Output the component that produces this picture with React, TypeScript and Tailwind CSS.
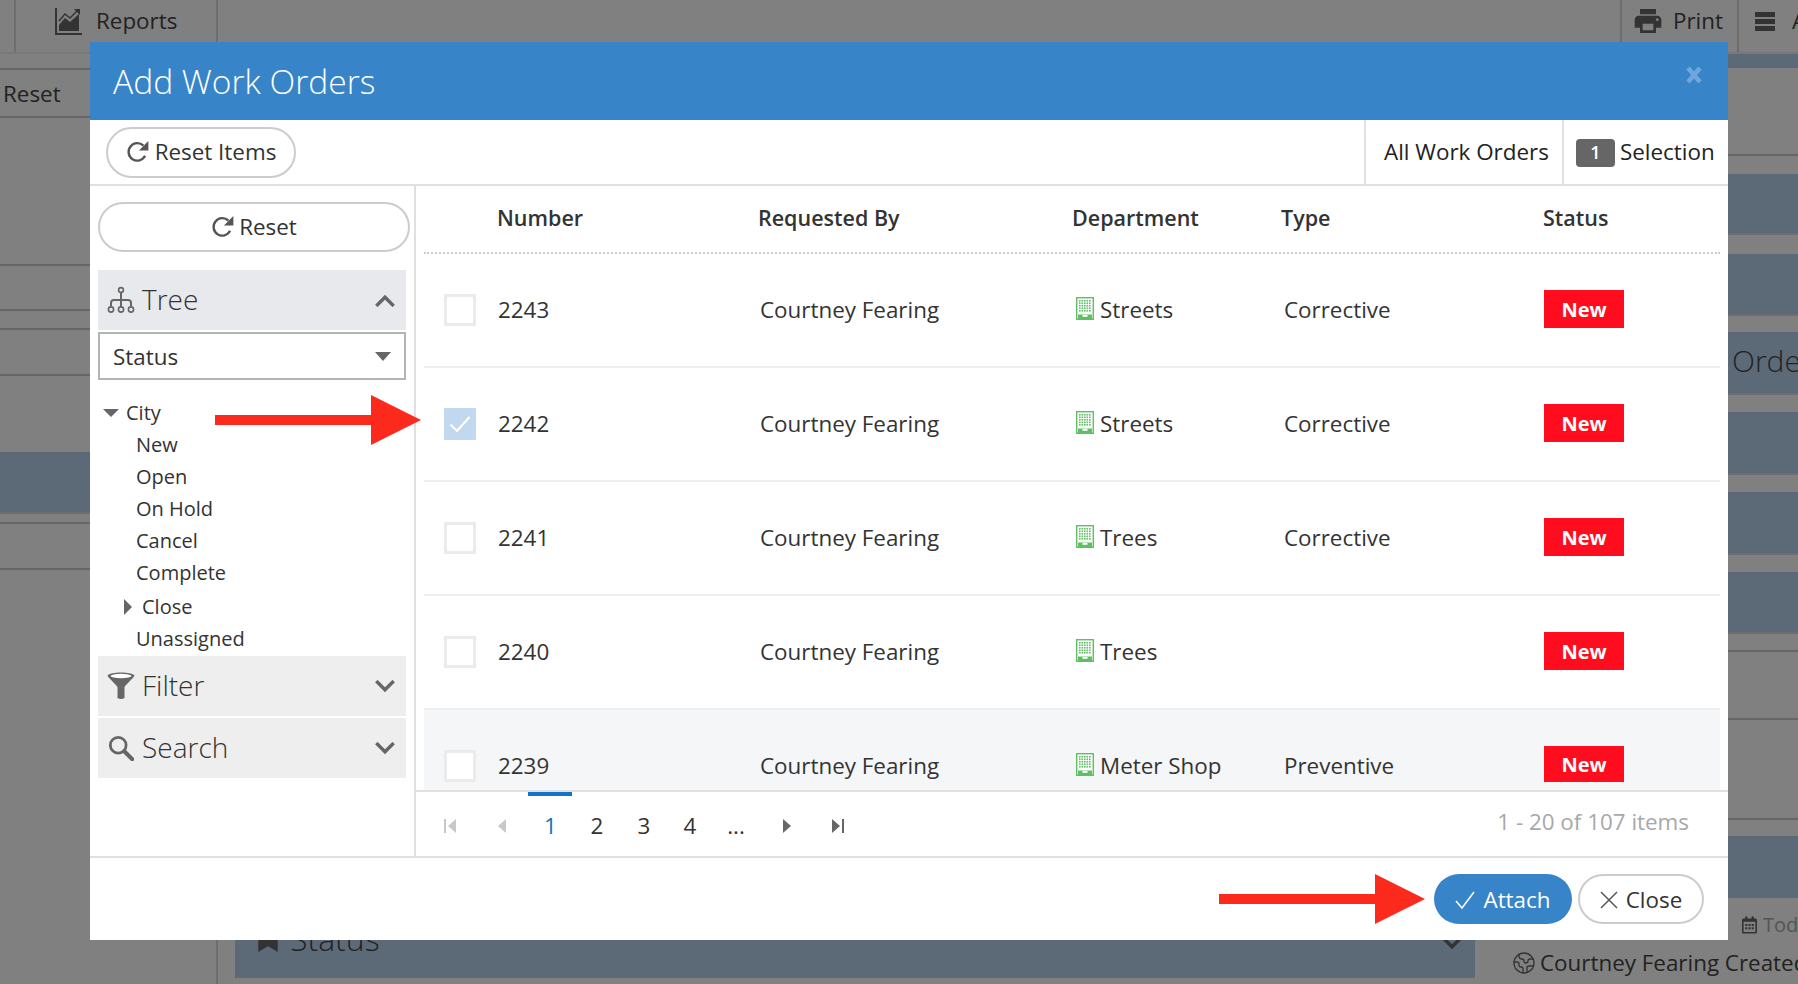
import React from 'react';
import { FaBookmark, FaRegCalendarAlt } from 'react-icons/fa';
import { MdLocalPrintshop } from 'react-icons/md';
import { Earth } from 'lucide-react';

const rows = [
  { id: '2243', dept: 'Streets', type: 'Corrective' },
  { id: '2242', dept: 'Streets', type: 'Corrective', checked: true },
  { id: '2241', dept: 'Trees', type: 'Corrective' },
  { id: '2240', dept: 'Trees', type: '' },
  { id: '2239', dept: 'Meter Shop', type: 'Preventive', cut: true },
];

const treeItems = ['New', 'Open', 'On Hold', 'Cancel', 'Complete'];

function RedoIcon({ className }: { className?: string }) {
  return (
    <svg viewBox="0 0 22 22" className={className} fill="none">
      <path d="M17.5 14.5A8 8 0 1 1 16 5.2" stroke="#555" strokeWidth="2.2" />
      <path d="M20.5 1v8.6h-8.6z" fill="#555" />
    </svg>
  );
}

function TreeIcon() {
  return (
    <svg viewBox="0 0 28 28" className="w-[28px] h-[28px]" fill="none" stroke="#666" strokeWidth="1.6">
      <circle cx="14" cy="4" r="2.4" />
      <path d="M14 6.5V21M4 20v-3q0-3 3-3h14q3 0 3 3v3" strokeWidth="2" />
      <circle cx="4" cy="23.5" r="2.6" />
      <circle cx="14" cy="23.5" r="2.6" />
      <circle cx="24" cy="23.5" r="2.6" />
    </svg>
  );
}

function FunnelIcon() {
  return (
    <svg viewBox="0 0 28 28" className="w-[28px] h-[28px]">
      <path d="M0.5 3.5C3 -0.5 25 -0.5 27.5 3.5C27.5 5 18.5 13 17.5 15V26q-3.5 2-7 0V15C9.5 13 0.5 5 0.5 3.5z" fill="#666" />
      <ellipse cx="14" cy="4" rx="10.5" ry="2.2" fill="#fff" />
    </svg>
  );
}

function SearchIcon() {
  return (
    <svg viewBox="0 0 28 28" className="w-[26px] h-[26px]" fill="none" stroke="#666">
      <circle cx="11" cy="11" r="8.5" strokeWidth="3" />
      <path d="M17.5 17.5L26 26" strokeWidth="4.5" strokeLinecap="round" />
    </svg>
  );
}

function Chevron({ up, color = '#666' }: { up?: boolean; color?: string }) {
  return (
    <svg viewBox="0 0 20 12" className="w-[22px] h-[13px]" fill="none" stroke={color} strokeWidth="3.2">
      <path d={up ? 'M2 11L10 3l8 8' : 'M2 1l8 8 8-8'} />
    </svg>
  );
}

function BuildingIcon() {
  const dots = [];
  for (let y = 3; y < 15; y += 2.5) {
    for (let x = 3; x < 15; x += 2.5) {
      dots.push(<rect key={`${x}-${y}`} x={x} y={y} width="1.6" height="1.6" fill="#5fbf62" />);
    }
  }
  return (
    <svg viewBox="0 0 18 23" className="w-[18px] h-[23px] shrink-0 mb-[2px]">
      <rect x="0.7" y="0.7" width="16.6" height="21.6" fill="#fff" stroke="#5fbf62" strokeWidth="1.4" />
      {dots}
      <path d="M2 17.5h14V22H2z" fill="#5fbf62" />
      <rect x="6.5" y="17.8" width="5" height="2" fill="#fff" />
    </svg>
  );
}

function ChartIcon() {
  return (
    <svg viewBox="0 0 27 27" className="w-[27px] h-[27px]">
      <path d="M1 0v26h26" fill="none" stroke="#333" strokeWidth="2" />
      <path d="M4 23v-6l6-7 5 4 9-8v17z" fill="#333" />
      <path d="M4 13l6-7 5 4 7-7" fill="none" stroke="#333" strokeWidth="1.4" />
      <path d="M19 1h6v6z" fill="#333" />
    </svg>
  );
}

function Tri({ dir, disabled }: { dir: 'first' | 'prev' | 'next' | 'last'; disabled?: boolean }) {
  const color = disabled ? '#c8c8c8' : '#666';
  return (
    <svg viewBox="0 0 14 14" className="w-[14px] h-[14px]" fill={color}>
      {dir === 'first' && <path d="M1 0h2v14H1zM13 0v14L5 7z" />}
      {dir === 'prev' && <path d="M11 0v14L3 7z" />}
      {dir === 'next' && <path d="M3 0v14l8-7z" />}
      {dir === 'last' && <path d="M1 0v14l8-7zM11 0h2v14h-2z" />}
    </svg>
  );
}

function Arrow({ className }: { className?: string }) {
  return (
    <svg viewBox="0 0 206 50" className={className} fill="#fc2a1c">
      <path d="M0 20h156V0l50 25-50 25V30H0z" />
    </svg>
  );
}

function Background() {
  return (
    <div className="h-full flex flex-col text-[#222] text-[22.4px]">
      <div className="h-[54px] shrink-0 flex items-center border-b-2 border-[#787878]">
        <div className="w-[16px] h-full border-r-2 border-[#6e6e6e]" />
        <div className="w-[202px] h-full border-r-2 border-[#6e6e6e] flex items-center pl-[39px] gap-[14px] pb-[10px]">
          <ChartIcon />
          Reports
        </div>
        <div className="flex-1" />
        <div className="w-[117px] h-full border-l-2 border-[#6e6e6e] flex items-center pl-[10px] gap-[9px] pb-[10px]">
          <MdLocalPrintshop className="w-[32px] h-[32px] text-[#333]" />
          Print
        </div>
        <div className="w-[61px] h-full border-l-2 border-[#6e6e6e] flex items-center pl-[16px] gap-[17px] pb-[10px]">
          <div className="flex flex-col gap-[2px] shrink-0">
            <div className="w-[20px] h-[5px] bg-[#333]" />
            <div className="w-[20px] h-[5px] bg-[#333]" />
            <div className="w-[20px] h-[5px] bg-[#333]" />
          </div>
          A
        </div>
      </div>
      <div className="flex-1 flex min-h-0">
        <div className="w-[218px] shrink-0 border-r-2 border-[#6e6e6e]">
          <div className="h-[16px] border-b-2 border-[#666]" />
          <div className="h-[48px] border-b-2 border-[#666] pl-[3px] pt-[2px] flex items-center">Reset</div>
          <div className="h-[148px] border-b-2 border-[#666]" />
          <div className="h-[45px] border-b-2 border-[#666]" />
          <div className="h-[19px] border-b-2 border-[#666]" />
          <div className="h-[46px] border-b-2 border-[#666]" />
          <div className="h-[76px]" />
          <div className="h-[62px] bg-[#5c6a78] border-b-2 border-[#6e6e6e]" />
          <div className="h-[10px] border-b-2 border-[#666]" />
          <div className="h-[46px] border-b-2 border-[#666]" />
        </div>
        <div className="flex-1 flex flex-col justify-end pl-[17px] pr-[18px] pb-[6px]">
          <div className="h-[60px] bg-[#5c6a78] flex items-end justify-between px-[23px] pb-[15px] text-[32px] font-light">
            <div className="flex items-center gap-[12px]">
              <FaBookmark className="w-[20px] h-[26px] text-[#333]" />
              Status
            </div>
            <div className="mr-[-11px] mb-[13px]"><Chevron color="#333" /></div>
          </div>
        </div>
        <div className="w-[305px] shrink-0 flex flex-col items-end">
          <div className="w-[235px] h-[14px] bg-[#5c6a78]" />
          <div className="w-[235px] h-[88px] border-b-2 border-[#666]" />
          <div className="w-[235px] h-[18px]" />
          <div className="w-[235px] h-[61px] bg-[#5c6a78] border-b-2 border-[#6e6e6e]" />
          <div className="w-[235px] h-[19px]" />
          <div className="w-[235px] h-[62px] bg-[#5c6a78] border-b-2 border-[#6e6e6e]" />
          <div className="w-[235px] h-[16px]" />
          <div className="w-[235px] h-[63px] bg-[#5c6a78] border-b-2 border-[#6e6e6e] overflow-hidden pl-[169px] pb-[4px] flex items-center text-[30px] font-light">
            Orders
          </div>
          <div className="w-[235px] h-[17px]" />
          <div className="w-[235px] h-[63px] bg-[#5c6a78] border-b-2 border-[#6e6e6e]" />
          <div className="w-[235px] h-[17px]" />
          <div className="w-[235px] h-[63px] bg-[#5c6a78] border-b-2 border-[#6e6e6e]" />
          <div className="w-[235px] h-[17px]" />
          <div className="w-[235px] h-[62px] bg-[#5c6a78] border-b-2 border-[#6e6e6e]" />
          <div className="w-[235px] h-[18px] border-b-2 border-[#666]" />
          <div className="w-[235px] h-[68px] border-b-2 border-[#666]" />
          <div className="w-[235px] h-[100px] border-b-2 border-[#666]" />
          <div className="w-[235px] h-[16px]" />
          <div className="w-[235px] h-[62px] bg-[#5c6a78]" />
          <div className="w-full flex-1 flex flex-col pl-[19px] overflow-hidden whitespace-nowrap">
            <div className="h-[54px] shrink-0 flex items-center justify-end gap-[6px] text-[20px] text-[#555]">
              <span className="w-[2px] h-[18px] bg-[#555] mr-[8px]" />
              <FaRegCalendarAlt className="w-[15px] h-[18px] text-[#333]" />
              <span className="w-[35px] overflow-hidden">Today</span>
            </div>
            <div className="flex items-center gap-[4px] mt-[-6px]">
              <Earth className="w-[24px] h-[24px] shrink-0 text-[#333]" strokeWidth={1.3} />
              Courtney Fearing Created
            </div>
          </div>
        </div>
      </div>
    </div>
  );
}

function OrdersTable() {
  return (
    <div className="h-[604px] shrink-0 overflow-hidden px-[8px]">
      <div className="h-[68px] pb-[2px] grid grid-cols-[73px_261px_314px_209px_262px_1fr] items-center border-b-2 border-dotted border-[#ccc] font-semibold text-[21.5px]">
        <div />
        <div>Number</div>
        <div>Requested By</div>
        <div>Department</div>
        <div>Type</div>
        <div>Status</div>
      </div>
      {rows.map(r => (
        <div
          key={r.id}
          className={`h-[114px] grid grid-cols-[74px_262px_316px_208px_260px_1fr] items-center border-b-2 border-[#eee] ${r.cut ? 'bg-[#f5f6f8]' : ''}`}
        >
          <div className="pl-[20px]">
            {r.checked ? (
              <div className="w-[32px] h-[32px] bg-[#c2d8ee] flex items-center justify-center">
                <svg viewBox="0 0 22 18" className="w-[22px] h-[18px]" fill="none" stroke="#fff" strokeWidth="2.2"><path d="M1.5 9.5L8 16 20.5 2" /></svg>
              </div>
            ) : (
              <div className="w-[32px] h-[32px] border-[3px] border-[#ebebeb] bg-white" />
            )}
          </div>
          <div>{r.id}</div>
          <div>Courtney Fearing</div>
          <div className="flex items-center gap-[6px]">
            <BuildingIcon />
            {r.dept}
          </div>
          <div>{r.type}</div>
          <div
            className={`w-[80px] bg-[#ff0d1e] text-white font-bold text-[20px] pt-[1px] flex items-center justify-center ${r.cut ? 'h-[36px] mb-[4px]' : 'h-[38px] mb-[2px]'}`}
          >
            New
          </div>
        </div>
      ))}
    </div>
  );
}

function AddWorkOrders() {
  return (
    <div className="absolute left-[90px] top-[42px] w-[1638px] h-[898px] bg-white flex flex-col text-[22.4px] text-[#333]">
      <div className="h-[78px] shrink-0 bg-[#3884c8] flex items-center justify-between pl-[23px] pr-[26px] text-white">
        <span className="text-[33.6px] font-light pt-[1px]">Add Work Orders</span>
        <span className="mb-[12px] text-[#6fa7dc]">
          <svg viewBox="0 0 16 18" className="w-[16px] h-[18px]" fill="none" stroke="currentColor" strokeWidth="4.5">
            <path d="M2 2l12 14M14 2L2 16" />
          </svg>
        </span>
      </div>

      <div className="h-[66px] shrink-0 flex items-stretch justify-between border-b-2 border-[#e0e0e0]">
        <div className="pl-[16px] flex items-center">
          <button className="h-[51px] w-[190px] rounded-[26px] border-2 border-[#ccc] flex items-center justify-center gap-[5px]">
            <RedoIcon className="w-[24px] h-[24px]" />
            Reset Items
          </button>
        </div>
        <div className="flex items-stretch text-[#222]">
          <div className="w-[198px] border-l-2 border-[#e0e0e0] flex items-center pl-[18px]">All Work Orders</div>
          <div className="w-[166px] border-l-2 border-[#e0e0e0] flex items-center pl-[12px] gap-[5px]">
            <span className="w-[39px] h-[28px] mt-[1px] rounded-[4px] bg-[#666] text-white text-[18px] font-semibold flex items-center justify-center">1</span>
            Selection
          </div>
        </div>
      </div>

      <div className="h-[672px] shrink-0 flex border-b-2 border-[#e0e0e0]">
        <div className="w-[326px] shrink-0 border-r-2 border-[#e0e0e0] pl-[8px] pt-[16px]">
          <button className="h-[50px] w-[312px] rounded-[25px] border-2 border-[#ccc] flex items-center justify-center gap-[4px]">
            <RedoIcon className="w-[24px] h-[24px]" />
            Reset
          </button>
          <div className="w-[308px] mt-[18px]">
            <div className="h-[60px] bg-[#e8e9ed] flex items-center justify-between pl-[9px] pr-[10px] text-[28px] font-light">
              <div className="flex items-center gap-[7px]">
                <TreeIcon />
                <span className="pb-[2px]">Tree</span>
              </div>
              <Chevron up />
            </div>
            <div className="mt-[2px] h-[48px] border-2 border-[#b4b4b4] flex items-center justify-between pl-[13px] pr-[13px]">
              <span className="pt-[2px]">Status</span>
              <svg viewBox="0 0 16 9" className="w-[16px] h-[9px]" fill="#666"><path d="M0 0h16L8 9z" /></svg>
            </div>
            <div className="mt-[17px] text-[20px] leading-[32px] h-[259px]">
              <div className="flex items-center pl-[5px] gap-[7px]">
                <svg viewBox="0 0 16 8" className="w-[16px] h-[8px]" fill="#666"><path d="M0 0h16L8 8z" /></svg>
                City
              </div>
              {treeItems.map(t => (
                <div key={t} className="pl-[38px]">{t}</div>
              ))}
              <div className="flex items-center pl-[26px] gap-[10px] mt-[2px]">
                <svg viewBox="0 0 8 16" className="w-[8px] h-[16px]" fill="#666"><path d="M0 0v16l8-8z" /></svg>
                Close
              </div>
              <div className="pl-[38px]">Unassigned</div>
            </div>
            <div className="h-[60px] bg-[#eee] flex items-center justify-between pl-[9px] pr-[10px] text-[28px] font-light">
              <div className="flex items-center gap-[7px]">
                <FunnelIcon />
                <span className="pb-[2px]">Filter</span>
              </div>
              <Chevron />
            </div>
            <div className="h-[60px] mt-[2px] bg-[#eee] flex items-center justify-between pl-[10px] pr-[10px] text-[28px] font-light">
              <div className="flex items-center gap-[8px]">
                <SearchIcon />
                <span className="pb-[2px]">Search</span>
              </div>
              <Chevron />
            </div>
          </div>
        </div>

        <div className="flex-1 min-w-0 flex flex-col">
          <OrdersTable />

          <div className="flex-1 flex items-stretch justify-between border-t-2 border-[#e0e0e0] pl-[8px]">
            <div className="flex items-stretch">
              <div className="w-[52px] border-t-4 border-transparent flex items-center justify-center"><Tri dir="first" disabled /></div>
              <div className="w-[52px] border-t-4 border-transparent flex items-center justify-center"><Tri dir="prev" disabled /></div>
              <div className="w-[44px] pl-[1px] border-t-4 border-[#1274c4] text-[#1274c4] flex items-center justify-center">1</div>
              <div className="w-[48px] pl-[2px] border-t-4 border-transparent flex items-center justify-center">2</div>
              <div className="w-[46px] pl-[2px] border-t-4 border-transparent flex items-center justify-center">3</div>
              <div className="w-[46px] pl-[2px] border-t-4 border-transparent flex items-center justify-center">4</div>
              <div className="w-[48px] border-t-4 border-transparent flex items-center justify-center">...</div>
              <div className="w-[52px] pl-[2px] border-t-4 border-transparent flex items-center justify-center"><Tri dir="next" /></div>
              <div className="w-[52px] border-t-4 border-transparent flex items-center justify-center"><Tri dir="last" /></div>
            </div>
            <div className="flex items-center pr-[39px] pb-[4px] text-[#a8a8a8]">1 - 20 of 107 items</div>
          </div>
        </div>
      </div>

      <div className="flex-1 flex items-center justify-end pr-[24px] gap-[6px]">
        <button className="h-[50px] w-[138px] rounded-[25px] bg-[#3884c8] text-white pt-[1px] flex items-center justify-center gap-[8px]">
          <svg viewBox="0 0 20 20" className="w-[20px] h-[20px]" fill="none" stroke="#fff" strokeWidth="1.5"><path d="M1 11l6 7L19 2" /></svg>
          Attach
        </button>
        <button className="h-[50px] w-[126px] rounded-[25px] border-2 border-[#ccc] pt-[1px] flex items-center justify-center gap-[8px]">
          <svg viewBox="0 0 18 18" className="w-[18px] h-[18px]" fill="none" stroke="#555" strokeWidth="1.5"><path d="M1 1l16 16M17 1L1 17" /></svg>
          Close
        </button>
      </div>
    </div>
  );
}

export default function App() {
  return (
    <div className="relative h-screen overflow-hidden bg-[#808080] font-['Open_Sans','Noto_Sans',sans-serif]">
      <Background />
      <AddWorkOrders />
      <Arrow className="absolute left-[215px] top-[395px] w-[206px] h-[50px]" />
      <Arrow className="absolute left-[1219px] top-[874px] w-[206px] h-[50px]" />
    </div>
  );
}
